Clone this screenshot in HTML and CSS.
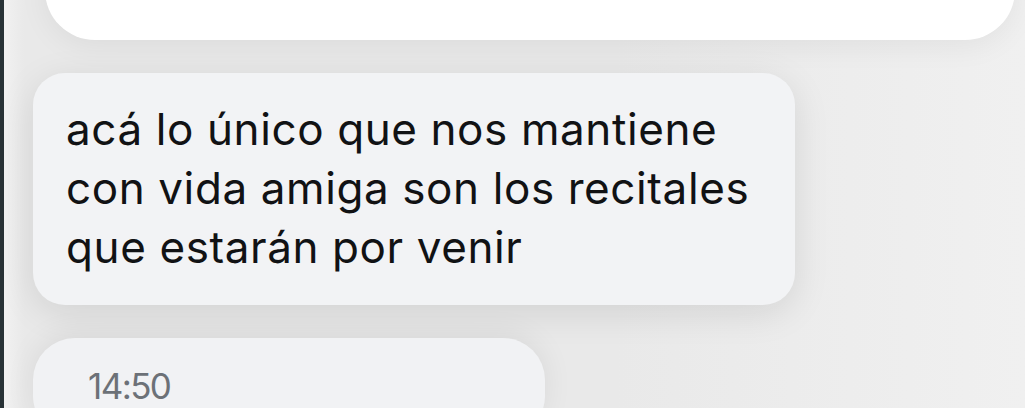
FILE: index.html
```html
<!DOCTYPE html>
<html lang="es">
<head>
<meta charset="utf-8">
<title>Chat</title>
<link rel="stylesheet" href="styles.css">
</head>
<body>
<div class="screen">
  <div class="edge"></div>
  <div class="chat">
    <div class="bubble-top"></div>
    <div class="bubble-msg">
      <p class="msg-text">acá lo único que nos mantiene<br>con vida amiga son los recitales<br>que estarán por venir</p>
    </div>
    <div class="bubble-time">
      <span class="time">14:50</span>
    </div>
  </div>
</div>
</body>
</html>
```

FILE: styles.css
```css
html, body {
  margin: 0;
  padding: 0;
  width: 1025px;
  height: 408px;
  overflow: hidden;
}
body {
  font-family: Inter, "Liberation Sans", Arial, sans-serif;
  background: #ececec;
}
.screen {
  display: flex;
  height: 408px;
  overflow: hidden;
}
.edge {
  width: 4px;
  flex: none;
  background: #283236;
}
.chat {
  flex: 1;
  display: flex;
  flex-direction: column;
  align-items: flex-start;
  background: linear-gradient(90deg, #f1f1f1 0px, #e9e9e9 20px, #e9e9e9 60%, #f0f0f0 100%);
  padding-left: 29px;
}
.chat > div {
  flex: none;
}
.bubble-top {
  width: 970px;
  height: 100px;
  margin-top: -60px;
  margin-left: 12px;
  background: #ffffff;
  border-radius: 58px;
  box-shadow: 0 6px 30px rgba(0,0,0,0.06);
}
.bubble-msg {
  margin-top: 33px;
  width: 762px;
  box-sizing: border-box;
  height: 232px;
  padding: 27px 20px 0 33px;
  background: #f2f3f5;
  border-radius: 32px;
  box-shadow: 0 8px 36px rgba(0,0,0,0.1);
}
.msg-text {
  margin: 0;
  font-size: 44px;
  line-height: 59px;
  color: #111214;
  letter-spacing: 0.6px;
}
.bubble-time {
  margin-top: 33px;
  width: 512px;
  box-sizing: border-box;
  height: 100px;
  padding: 33px 0 0 55px;
  background: #f1f2f4;
  border-radius: 42px;
  box-shadow: 0 -4px 30px rgba(0,0,0,0.07);
}
.time {
  display: block;
  font-size: 35px;
  line-height: 30px;
  color: #6c7177;
  letter-spacing: -1.6px;
}
```
